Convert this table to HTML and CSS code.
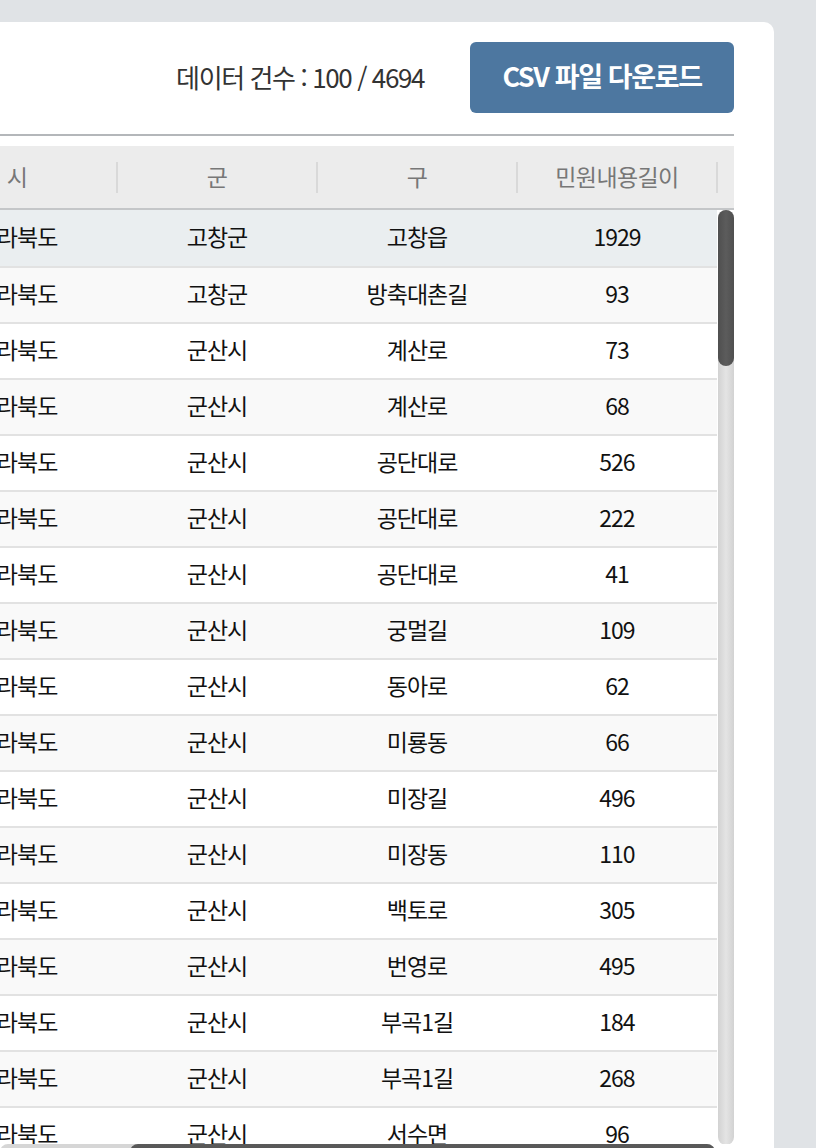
FILE: index.html
```html
<!DOCTYPE html>
<html lang="ko">
<head>
<meta charset="utf-8">
<title>데이터</title>
<link rel="stylesheet" href="styles.css">
</head>
<body>
<div class="page">
  <section class="card">
    <div class="toolbar">
      <span class="count">데이터 건수 : 100 / 4694</span>
      <button class="btn">CSV 파일 다운로드</button>
    </div>
    <div class="rule"></div>
    <div class="grid">
      <div class="thead">
        <div class="th">시</div>
        <div class="th">군</div>
        <div class="th">구</div>
        <div class="th">민원내용길이</div>
        <div class="th-pad"></div>
      </div>
      <div class="body">
        <div class="rows">
          <div class="tr sel"><div class="td">전라북도</div><div class="td">고창군</div><div class="td">고창읍</div><div class="td">1929</div></div>
          <div class="tr"><div class="td">전라북도</div><div class="td">고창군</div><div class="td">방축대촌길</div><div class="td">93</div></div>
          <div class="tr"><div class="td">전라북도</div><div class="td">군산시</div><div class="td">계산로</div><div class="td">73</div></div>
          <div class="tr"><div class="td">전라북도</div><div class="td">군산시</div><div class="td">계산로</div><div class="td">68</div></div>
          <div class="tr"><div class="td">전라북도</div><div class="td">군산시</div><div class="td">공단대로</div><div class="td">526</div></div>
          <div class="tr"><div class="td">전라북도</div><div class="td">군산시</div><div class="td">공단대로</div><div class="td">222</div></div>
          <div class="tr"><div class="td">전라북도</div><div class="td">군산시</div><div class="td">공단대로</div><div class="td">41</div></div>
          <div class="tr"><div class="td">전라북도</div><div class="td">군산시</div><div class="td">궁멀길</div><div class="td">109</div></div>
          <div class="tr"><div class="td">전라북도</div><div class="td">군산시</div><div class="td">동아로</div><div class="td">62</div></div>
          <div class="tr"><div class="td">전라북도</div><div class="td">군산시</div><div class="td">미룡동</div><div class="td">66</div></div>
          <div class="tr"><div class="td">전라북도</div><div class="td">군산시</div><div class="td">미장길</div><div class="td">496</div></div>
          <div class="tr"><div class="td">전라북도</div><div class="td">군산시</div><div class="td">미장동</div><div class="td">110</div></div>
          <div class="tr"><div class="td">전라북도</div><div class="td">군산시</div><div class="td">백토로</div><div class="td">305</div></div>
          <div class="tr"><div class="td">전라북도</div><div class="td">군산시</div><div class="td">번영로</div><div class="td">495</div></div>
          <div class="tr"><div class="td">전라북도</div><div class="td">군산시</div><div class="td">부곡1길</div><div class="td">184</div></div>
          <div class="tr"><div class="td">전라북도</div><div class="td">군산시</div><div class="td">부곡1길</div><div class="td">268</div></div>
          <div class="tr"><div class="td">전라북도</div><div class="td">군산시</div><div class="td">서수면</div><div class="td">96</div></div>
          <div class="tr"><div class="td">전라북도</div><div class="td">군산시</div><div class="td">서수면</div><div class="td">96</div></div>
        </div>
        <div class="vscroll"><div class="vthumb"></div></div>
        <div class="hscroll"><div class="hthumb"></div></div>
        <div class="corner"></div>
      </div>
    </div>
  </section>
</div>
</body>
</html>
```

FILE: styles.css
```css
html, body {
  margin: 0;
  padding: 0;
  background: #e0e3e6;
  overflow: hidden;
}
body {
  font-family: "Noto Sans CJK KR", "Noto Sans", sans-serif;
  width: 816px;
  height: 1148px;
}
.page {
  padding-top: 22px;
}
.card {
  margin-left: -100px;
  width: 874px;
  box-sizing: border-box;
  padding: 20px 40px 0 17px;
  background: #fff;
  border-top-right-radius: 10px;
  height: 1200px;
}
.toolbar {
  display: flex;
  justify-content: flex-end;
  align-items: center;
  gap: 46px;
  height: 71px;
}
.count {
  font-size: 26px;
  color: #333;
  letter-spacing: -1.4px;
  line-height: 1;
  padding-bottom: 2px;
}
.btn {
  width: 264px;
  height: 71px;
  border: 0;
  border-radius: 6px;
  background: #4d77a0;
  color: #fff;
  font-family: inherit;
  font-size: 27px;
  font-weight: 700;
  letter-spacing: -1.4px;
  padding: 0 0 4px;
}
.rule {
  margin-top: 21px;
  height: 2px;
  background: #b4b7ba;
}
.grid {
  margin-top: 10px;
}
.thead {
  display: flex;
  height: 62px;
  background: #ececec;
  border-bottom: 2px solid #c4c6c8;
}
.th {
  width: 200px;
  display: flex;
  align-items: center;
  justify-content: center;
  font-size: 23px;
  color: #777;
  letter-spacing: -0.6px;
  position: relative;
  padding-bottom: 2px;
  box-sizing: border-box;
}
.th::after {
  content: "";
  position: absolute;
  right: -1px;
  top: 16px;
  width: 2px;
  height: 31px;
  background: #d9d9d9;
}
.th-pad {
  flex: 1;
}
.body {
  display: grid;
  grid-template-columns: 800px 17px;
  grid-template-rows: 934px 16px;
}
.rows {
  overflow: hidden;
}
.tr {
  display: flex;
  height: 54px;
  border-bottom: 2px solid #e2e2e2;
  background: #fff;
}
.tr:nth-child(even) {
  background: #f9f9f9;
}
.tr.sel {
  height: 56px;
  background: #eaeef0;
}
.td {
  width: 200px;
  display: flex;
  align-items: center;
  justify-content: center;
  font-size: 23px;
  color: #111;
  letter-spacing: -1px;
  padding-bottom: 4px;
  box-sizing: border-box;
}
.vscroll {
  margin-left: 1px;
  width: 16px;
  height: 935px;
  border-radius: 8px;
  background: linear-gradient(to right, #d2d2d2, #e4e4e4 50%, #d2d2d2);
}
.vthumb {
  height: 156px;
  border-radius: 8px;
  background: linear-gradient(to right, #4f4f4f, #5c5c5c 50%, #4f4f4f);
}
.hscroll {
  height: 16px;
  border-radius: 8px;
  background: #d6d6d6;
  margin-left: 83px;
  margin-right: 2px;
  display: flex;
}
.hthumb {
  margin-left: 130px;
  flex: 1;
  border-radius: 8px;
  background: linear-gradient(to bottom, #5a5a5a, #4f4f4f);
}
.corner {
  background: #fff;
}
```
